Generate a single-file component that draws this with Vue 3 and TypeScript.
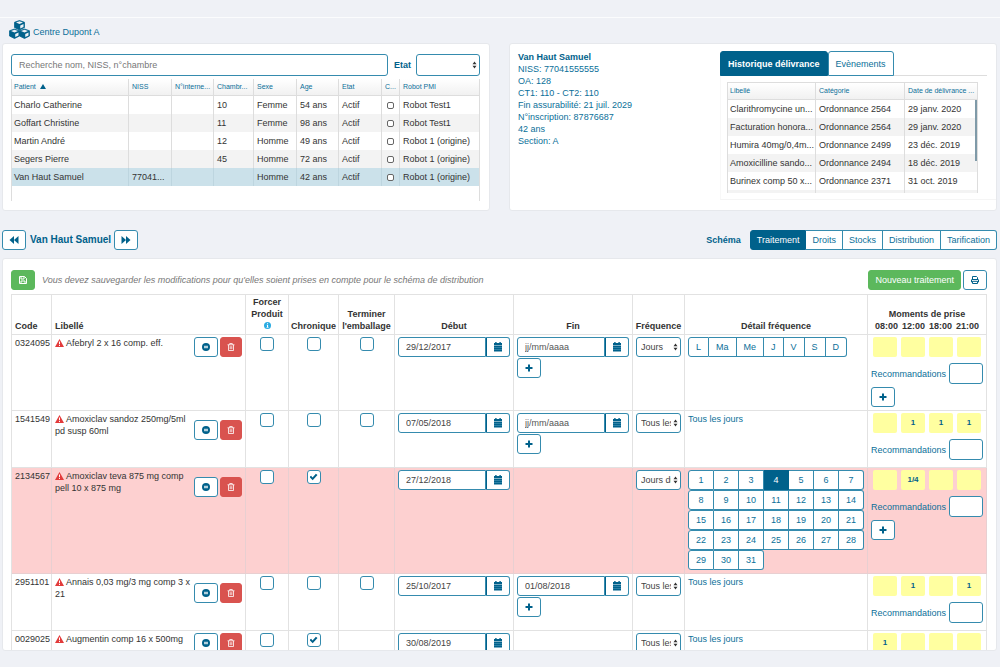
<script setup lang="ts">
import { ref } from 'vue'

interface Patient {
  name: string
  niss: string
  room: string
  sex: string
  age: string
  robot: string
}

interface Treatment {
  code: string
  label: string
  chronic: boolean
  canFinish: boolean
  start: string
  end: string | null
  frequency: string
  detail: 'week' | 'month' | 'daily'
  doses: string[]
  extraDose: boolean
  alert?: boolean
}

const patients: Patient[] = [
  { name: 'Charlo Catherine', niss: '', room: '10', sex: 'Femme', age: '54 ans', robot: 'Robot Test1' },
  { name: 'Goffart Christine', niss: '', room: '11', sex: 'Femme', age: '98 ans', robot: 'Robot Test1' },
  { name: 'Martin André', niss: '', room: '12', sex: 'Homme', age: '49 ans', robot: 'Robot 1 (origine)' },
  { name: 'Segers Pierre', niss: '', room: '45', sex: 'Homme', age: '72 ans', robot: 'Robot 1 (origine)' },
  { name: 'Van Haut Samuel', niss: '77041...', room: '', sex: 'Homme', age: '42 ans', robot: 'Robot 1 (origine)' },
]
const selected = ref('Van Haut Samuel')

const details: string[] = [
  'NISS: 77041555555',
  'OA: 128',
  'CT1: 110 - CT2: 110',
  'Fin assurabilité: 21 juil. 2029',
  'N°inscription: 87876687',
  '42 ans',
  'Section: A',
]

const history: string[][] = [
  ['Clarithromycine un...', 'Ordonnance 2564', '29 janv. 2020'],
  ['Facturation honora...', 'Ordonnance 2564', '29 janv. 2020'],
  ['Humira 40mg/0,4m...', 'Ordonnance 2499', '23 déc. 2019'],
  ['Amoxicilline sando...', 'Ordonnance 2494', '18 déc. 2019'],
  ['Burinex comp 50 x...', 'Ordonnance 2371', '31 oct. 2019'],
]

const sections = ['Traitement', 'Droits', 'Stocks', 'Distribution', 'Tarification']
const section = ref('Traitement')

const weekDays = ['L', 'Ma', 'Me', 'J', 'V', 'S', 'D']
const monthWeeks: number[][] = [0, 7, 14, 21, 28].map((first) =>
  Array.from({ length: Math.min(7, 31 - first) }, (_, i) => first + i + 1),
)
const monthDay = ref(4)
const hours = ['08:00', '12:00', '18:00', '21:00']

const treatments = ref<Treatment[]>([
  { code: '0324095', label: 'Afebryl 2 x 16 comp. eff.', chronic: false, canFinish: true, start: '29/12/2017', end: '', frequency: 'Jours', detail: 'week', doses: ['', '', '', ''], extraDose: true },
  { code: '1541549', label: 'Amoxiclav sandoz 250mg/5ml pd susp 60ml', chronic: false, canFinish: true, start: '07/05/2018', end: '', frequency: 'Tous les jours', detail: 'daily', doses: ['', '1', '1', '1'], extraDose: false },
  { code: '2134567', label: 'Amoxiclav teva 875 mg comp pell 10 x 875 mg', chronic: true, canFinish: false, start: '27/12/2018', end: null, frequency: 'Jours du mois', detail: 'month', doses: ['', '1/4', '', ''], extraDose: true, alert: true },
  { code: '2951101', label: 'Annais 0,03 mg/3 mg comp 3 x 21', chronic: false, canFinish: true, start: '25/10/2017', end: '01/08/2018', frequency: 'Tous les jours', detail: 'daily', doses: ['', '1', '', '1'], extraDose: false },
  { code: '0029025', label: 'Augmentin comp 16 x 500mg', chronic: true, canFinish: false, start: '30/08/2019', end: null, frequency: 'Tous les jours', detail: 'daily', doses: ['1', '', '', ''], extraDose: false },
])
</script>

<template>
  <div class="page">
    <header class="brand">
      <svg class="cubes" viewBox="0 0 42 38" aria-hidden="true">
        <g v-for="(c, i) in [[21, 10], [11, 27], [31, 27]]" :key="i" :transform="`translate(${c[0]} ${c[1]})`">
          <path d="M0-9 10-5.500V5L0 10-10 5V-5.500Z" fill="#00618b" stroke="#00618b" stroke-width="1.500" stroke-linejoin="round" />
          <path d="M0-7.500 7-4.800 0-2-7-4.800Z" fill="#eef1f6" />
          <path d="M1.500 .8 8-2V3.800L1.500 7Z" fill="#eef1f6" />
        </g>
      </svg>
      <span>Centre Dupont A</span>
    </header>

    <div class="top">
      <section class="card patients">
        <div class="search">
          <input type="text" class="field" aria-label="Recherche" placeholder="Recherche nom, NISS, n°chambre" />
          <label for="state">Etat</label>
          <span class="pick state">
            <select id="state" class="field"><option></option></select>
            <svg viewBox="0 0 6 10" aria-hidden="true"><path d="M3 .5 5.500 4H.5ZM3 9.500 5.500 6H.5Z" /></svg>
          </span>
        </div>
        <div class="frame grow">
          <table class="list">
            <colgroup><col /><col class="w43" /><col class="w42" /><col class="w40" /><col class="w43" /><col class="w42" /><col class="w43" /><col class="w18" /><col class="w80" /></colgroup>
            <thead>
              <tr>
                <th>Patient <svg class="sort" viewBox="0 0 6 5" aria-hidden="true"><path d="M3 0 6 5H0Z" /></svg></th>
                <th>NISS</th><th>N°interne...</th><th>Chambr...</th><th>Sexe</th><th>Age</th><th>Etat</th><th>C...</th><th>Robot PMI</th>
              </tr>
            </thead>
            <tbody>
              <tr v-for="p in patients" :key="p.name" :class="{ current: p.name === selected }" @click="selected = p.name">
                <td>{{ p.name }}</td><td>{{ p.niss }}</td><td></td><td>{{ p.room }}</td><td>{{ p.sex }}</td><td>{{ p.age }}</td><td>Actif</td>
                <td class="mini"><input type="checkbox" :aria-label="p.name" /></td>
                <td>{{ p.robot }}</td>
              </tr>
            </tbody>
          </table>
        </div>
      </section>

      <section class="card summary">
        <div class="identity">
          <strong>Van Haut Samuel</strong>
          <span v-for="d in details" :key="d">{{ d }}</span>
        </div>
        <div class="records">
          <div class="tabs">
            <button type="button" class="tab on">Historique délivrance</button>
            <button type="button" class="tab">Evènements</button>
          </div>
          <div class="tabpane">
            <div class="frame scroller">
              <table class="list">
                <colgroup><col /><col class="w89" /><col class="w73" /></colgroup>
                <thead><tr><th>Libellé</th><th>Catégorie</th><th>Date de délivrance ...</th></tr></thead>
                <tbody>
                  <tr v-for="h in history" :key="h[0]"><td v-for="c in h" :key="c">{{ c }}</td></tr>
                  <tr class="peek"><td></td><td></td><td></td></tr>
                </tbody>
              </table>
              <span class="thumb"></span>
            </div>
          </div>
        </div>
      </section>
    </div>

    <nav class="bar">
      <button type="button" class="btn icon" aria-label="Patient précédent"><svg class="i10" viewBox="0 0 10 10"><path d="M5 1V9L.5 5ZM9.500 1V9L5 5Z" /></svg></button>
      <strong class="who">Van Haut Samuel</strong>
      <button type="button" class="btn icon" aria-label="Patient suivant"><svg class="i10" viewBox="0 0 10 10"><path d="M5 1V9L9.500 5ZM.5 1V9L5 5Z" /></svg></button>
      <strong class="schema">Schéma</strong>
      <div class="group">
        <button v-for="s in sections" :key="s" type="button" class="btn tight" :class="{ on: s === section }" @click="section = s">{{ s }}</button>
      </div>
    </nav>

    <main class="card work">
      <div class="tools">
        <button type="button" class="btn green icon" aria-label="Sauvegarder">
          <svg class="i8" viewBox="0 0 8 8"><path d="M.5.500H5.500L7.500 2.500V7.500H.5ZM2 .5V3H5V.500M2 7.500V5H6V7.500" fill="none" stroke="#fff" stroke-width="1" /></svg>
        </button>
        <em>Vous devez sauvegarder les modifications pour qu'elles soient prises en compte pour le schéma de distribution</em>
        <button type="button" class="btn green tight">Nouveau traitement</button>
        <button type="button" class="btn icon" aria-label="Imprimer">
          <svg class="i8" viewBox="0 0 8 8"><path d="M1.500 3.500V.500H5.500L6.500 1.500V3.500M1.500 6H.5V4Q.5 3.500 1 3.500H7Q7.500 3.500 7.500 4V6H6.500M1.500 5.300H6.500V7.500H1.500Z" fill="none" stroke="#00618b" stroke-width="1" /></svg>
        </button>
      </div>

      <table class="plan">
        <colgroup><col class="w40" /><col class="w194" /><col class="w43" /><col class="w50" /><col class="w56" /><col class="w119" /><col class="w119" /><col class="w52" /><col /><col class="w119" /></colgroup>
        <thead>
          <tr>
            <th class="left">Code</th>
            <th class="left">Libellé</th>
            <th>Forcer<br />Produit<br /><svg class="info" viewBox="0 0 8 8" aria-hidden="true"><circle cx="4" cy="4" r="4" fill="#29abe2" /><path d="M3.400 1.300H4.700V2.300H3.400ZM3 3H4.700V5.800H5.200V6.600H2.900V5.800H3.400V3.800H3Z" fill="#fff" /></svg></th>
            <th>Chronique</th>
            <th>Terminer<br />l'emballage</th>
            <th>Début</th>
            <th>Fin</th>
            <th>Fréquence</th>
            <th>Détail fréquence</th>
            <th>Moments de prise<div class="hours"><span v-for="h in hours" :key="h">{{ h }}</span></div></th>
          </tr>
        </thead>
        <tbody>
          <tr v-for="t in treatments" :key="t.code" :class="{ alert: t.alert }">
            <td class="code">{{ t.code }}</td>
            <td>
              <div class="drug">
                <span class="name"><svg class="warn" viewBox="0 0 9 8" aria-hidden="true"><path d="M4.500 0 9 8H0Z" fill="#e23b3b" /><path d="M4 2.500H5V5.200H4ZM4 5.900H5V6.900H4Z" fill="#fff" /></svg> {{ t.label }}</span>
                <button type="button" class="btn icon" aria-label="Suspendre"><svg class="i8" viewBox="0 0 8 8"><circle cx="4" cy="4" r="4" /><path d="M2.300 2.700H3.700V5.300H2.300ZM4.300 2.700H5.700V5.300H4.300Z" fill="#fff" /></svg></button>
                <button type="button" class="btn red" aria-label="Supprimer"><svg class="i8" viewBox="0 0 8 8"><path d="M.5 1.800H7.500M2.700 1.800V.500H5.300V1.800M1.500 1.800V7.500H6.500V1.800M3.200 3.200V6.200M4.800 3.200V6.200" fill="none" stroke="#fff" stroke-width=".8" /></svg></button>
              </div>
            </td>
            <td class="tick"><input type="checkbox" aria-label="Forcer produit" /></td>
            <td class="tick"><input v-model="t.chronic" type="checkbox" aria-label="Chronique" /></td>
            <td class="tick"><input v-if="t.canFinish" type="checkbox" aria-label="Terminer l'emballage" /></td>
            <td>
              <div class="date">
                <input v-model="t.start" type="text" class="field" aria-label="Début" />
                <button type="button" class="btn icon" aria-label="Calendrier"><svg class="i10" viewBox="0 0 10 10"><path d="M1 1H2.200V0H3.600V1H6.400V0H7.800V1H9V3H1ZM1 3.500H9V9.500H1Z" /><path d="M1 5.500H9M1 7.500H9" stroke="#5ba3c0" stroke-width=".5" /></svg></button>
              </div>
            </td>
            <td>
              <template v-if="t.end !== null">
                <div class="date">
                  <input v-model="t.end" type="text" class="field" aria-label="Fin" placeholder="jj/mm/aaaa" />
                  <button type="button" class="btn icon" aria-label="Calendrier"><svg class="i10" viewBox="0 0 10 10"><path d="M1 1H2.200V0H3.600V1H6.400V0H7.800V1H9V3H1ZM1 3.500H9V9.500H1Z" /><path d="M1 5.500H9M1 7.500H9" stroke="#5ba3c0" stroke-width=".5" /></svg></button>
                </div>
                <button type="button" class="btn icon below" aria-label="Ajouter"><svg class="i8" viewBox="0 0 8 8"><path d="M3 .5H5V3H7.500V5H5V7.500H3V5H.5V3H3Z" /></svg></button>
              </template>
            </td>
            <td>
              <span class="pick freq">
                <select class="field" aria-label="Fréquence"><option>{{ t.frequency }}</option></select>
                <svg viewBox="0 0 6 10" aria-hidden="true"><path d="M3 .5 5.500 4H.5ZM3 9.500 5.500 6H.5Z" /></svg>
              </span>
            </td>
            <td>
              <div v-if="t.detail === 'week'" class="group">
                <button v-for="d in weekDays" :key="d" type="button" class="btn">{{ d }}</button>
              </div>
              <template v-else-if="t.detail === 'month'">
                <div v-for="w in monthWeeks" :key="w[0]" class="group month">
                  <button v-for="d in w" :key="d" type="button" class="btn" :class="{ on: d === monthDay }" @click="monthDay = d">{{ d }}</button>
                </div>
              </template>
              <span v-else class="daily">Tous les jours</span>
            </td>
            <td>
              <div class="doses"><button v-for="(d, i) in t.doses" :key="i" type="button" :aria-label="hours[i]">{{ d }}</button></div>
              <div class="advice"><label :for="'r' + t.code">Recommandations</label><input :id="'r' + t.code" type="text" class="field" /></div>
              <button v-if="t.extraDose" type="button" class="btn icon more" aria-label="Ajouter un moment"><svg class="i8" viewBox="0 0 8 8"><path d="M3 .5H5V3H7.500V5H5V7.500H3V5H.5V3H3Z" /></svg></button>
            </td>
          </tr>
        </tbody>
      </table>
    </main>
  </div>
</template>

<style>
body {
  background: #eff1f6;
}
</style>

<style scoped>
* {
  box-sizing: border-box;
}
.page {
  display: flex;
  flex-direction: column;
  height: 100vh;
  padding: 17px 3px 16px 2px;
  overflow: hidden;
  font: 9px/12px "Liberation Sans", Arial, sans-serif;
  color: #333;
}
.brand {
  display: flex;
  gap: 3px;
  height: 26px;
  padding: 2px 9px 0;
  margin: 0 -3px 0 -2px;
  border-top: 1px solid #fbfcfd;
  color: #0b6f99;
}
.brand span {
  padding-top: 6px;
}
.cubes {
  width: 21px;
  height: 19px;
}
.card {
  background: #fff;
  border: 1px solid #e6e8ec;
  border-radius: 3px;
}
.top {
  display: grid;
  grid-template-columns: 1fr 1fr;
  gap: 19px;
  height: 168px;
}
.patients {
  display: flex;
  flex-direction: column;
  gap: 3px;
  padding: 10px 9px 9px 8px;
}
.search {
  display: flex;
  align-items: center;
}
.search > .field {
  flex: 1;
  min-width: 0;
  padding: 0 7px;
}
.search label {
  margin: 0 5px 0 6px;
  font-weight: bold;
  color: #00618b;
}
.field {
  height: 22px;
  margin: 0;
  border: 1px solid #358bae;
  border-radius: 3px;
  background: #fff;
  color: #444;
  font: inherit;
  outline: 0;
}
.field::placeholder {
  color: #777;
}
.pick {
  position: relative;
  display: block;
}
.pick select {
  display: block;
  width: 100%;
  appearance: none;
}
.pick svg {
  position: absolute;
  right: 3px;
  top: 50%;
  width: 5px;
  height: 8px;
  margin-top: -4px;
  fill: #333;
  pointer-events: none;
}
.state {
  width: 64px;
}
.frame {
  border-left: 1px solid #ddd;
  border-right: 1px solid #ddd;
}
.grow {
  flex: 1;
}
.list {
  width: 100%;
  table-layout: fixed;
  border-spacing: 0;
}
.w18 {
  width: 18px;
}
.w40 {
  width: 40px;
}
.w42 {
  width: 42px;
}
.w43 {
  width: 43px;
}
.w50 {
  width: 50px;
}
.w52 {
  width: 52px;
}
.w56 {
  width: 56px;
}
.w73 {
  width: 73px;
}
.w80 {
  width: 80px;
}
.w89 {
  width: 89px;
}
.w119 {
  width: 119px;
}
.w194 {
  width: 194px;
}
.list th,
.list td {
  height: 18px;
  padding: 0 0 0 3px;
  border-left: 1px solid #ddd;
  overflow: hidden;
  text-align: left;
  white-space: nowrap;
}
.list th:first-child,
.list td:first-child {
  padding-left: 2px;
  border-left: 0;
}
.list th {
  height: 17px;
  border-bottom: 1px solid #ddd;
  background: linear-gradient(#fff, #f1f1f1);
  font-size: 7px;
  line-height: 8px;
  font-weight: normal;
  color: #0b6f99;
}
.list tr:nth-child(even) td {
  background: #f3f3f3;
}
.list tr.current td {
  background: #cbe1ea;
  border-color: #bdd5df;
}
.list .mini {
  padding: 0;
  text-align: center;
}
.mini input {
  display: block;
  width: 7px;
  height: 7px;
  margin: 0 auto;
  appearance: none;
  border: 1px solid #666;
  border-radius: 2px;
  background: #fff;
}
.sort {
  width: 6px;
  height: 5px;
  margin-left: 2px;
  fill: #00618b;
}
.summary {
  display: flex;
  justify-content: space-between;
}
.identity {
  display: flex;
  flex-direction: column;
  padding: 7px 8px;
  color: #0b6f99;
}
.identity strong {
  color: #00618b;
}
.records {
  width: 276px;
  padding: 7px 0 9px;
}
.tabs {
  display: flex;
  margin-right: 9px;
  border-bottom: 1px solid #ddd;
}
.tab {
  height: 25px;
  margin-bottom: -1px;
  padding: 0 7px;
  border: 1px solid #358bae;
  border-radius: 3px 3px 0 0;
  background: #fff;
  color: #0b6f99;
  font: inherit;
}
.tab.on {
  border-color: #00618b;
  background: #00618b;
  color: #fff;
  font-weight: bold;
}
.tabpane {
  padding: 6px 18px 6px 6px;
  border-bottom: 1px solid #f5f5f5;
  border-left: 1px solid #f8f8f8;
}
.scroller {
  position: relative;
  height: 111px;
  border-top: 1px solid #ddd;
  overflow: hidden;
}
.peek td {
  height: 6px;
}
.thumb {
  position: absolute;
  top: 17px;
  right: 0;
  width: 2px;
  height: 61px;
  background: #7f9aa8;
}
.bar {
  display: flex;
  align-items: center;
  margin: 19px 0 8px;
  color: #00618b;
}
.who {
  margin: 0 3px 0 4px;
  font-size: 10px;
}
.schema {
  margin: 0 9px 0 auto;
}
.btn {
  height: 20px;
  padding: 0 7px;
  border: 1px solid #358bae;
  border-radius: 3px;
  background: #fff;
  color: #0b6f99;
  font: inherit;
  white-space: nowrap;
}
.btn svg {
  display: block;
  margin: 0 auto;
  fill: #00618b;
}
.tight {
  padding: 0 6px;
}
.icon {
  flex: none;
  width: 24px;
  padding: 0;
}
.i8 {
  width: 8px;
  height: 8px;
}
.i10 {
  width: 10px;
  height: 10px;
}
.green {
  border-color: #5cb85c;
  background: #5cb85c;
  color: #fff;
}
.red {
  flex: none;
  width: 22px;
  padding: 0;
  border-color: #d9534f;
  background: #d9534f;
}
.btn.on {
  border-color: #00618b;
  background: #00618b;
  color: #fff;
}
.group {
  display: flex;
}
.group .btn {
  border-radius: 0;
}
.group .btn + .btn {
  border-left: 0;
}
.group .btn:first-child {
  border-radius: 3px 0 0 3px;
}
.group .btn:last-child {
  border-radius: 0 3px 3px 0;
}
.month .btn {
  width: 25px;
  padding: 0;
}
.month .btn:first-child {
  width: 26px;
}
.work {
  flex: 1;
  min-height: 0;
  padding: 11px 9px 0 8px;
  overflow: hidden;
}
.tools {
  display: flex;
  align-items: center;
  gap: 2px;
  margin-bottom: 4px;
}
.tools em {
  flex: 1;
  padding-left: 5px;
  color: #777;
}
.plan {
  width: 100%;
  table-layout: fixed;
  border-spacing: 0;
  border-top: 1px solid #e2e2e2;
  border-left: 1px solid #e2e2e2;
}
.plan th,
.plan td {
  padding: 2px 3px 3px;
  border-right: 1px solid #e2e2e2;
  border-bottom: 1px solid #e2e2e2;
  vertical-align: top;
}
.plan th {
  height: 40px;
  padding: 0 0 2px;
  vertical-align: bottom;
  white-space: nowrap;
}
.plan th.left {
  padding-left: 3px;
  text-align: left;
}
.plan tbody tr {
  height: 57px;
}
.plan tr.alert td {
  background: #fdd0d0;
  border-color: #e8cfd1;
}
.info {
  width: 7px;
  height: 7px;
}
.hours {
  display: flex;
  justify-content: center;
  gap: 4px;
}
.plan .code {
  padding-right: 0;
}
.drug {
  display: flex;
  align-items: flex-end;
  gap: 2px;
}
.name {
  flex: 1;
  align-self: flex-start;
  padding-bottom: 3px;
}
.warn {
  width: 9px;
  height: 8px;
  vertical-align: -1px;
}
.tick input {
  display: block;
  position: relative;
  width: 14px;
  height: 14px;
  margin: 0 auto;
  appearance: none;
  border: 1px solid #358bae;
  border-radius: 3px;
  background: #fff;
}
.tick input:checked::before {
  content: "";
  position: absolute;
  inset: 2px;
  background: #00618b;
  clip-path: polygon(0 50%, 20% 35%, 38% 55%, 80% 8%, 100% 25%, 40% 92%);
}
.date {
  display: flex;
}
.date .field {
  flex: 1;
  min-width: 0;
  height: 20px;
  padding: 0 7px;
  border-radius: 3px 0 0 3px;
}
.date .field::placeholder {
  color: #555;
}
.date .btn {
  border-left-color: #00618b;
  border-radius: 0 3px 3px 0;
}
.below {
  display: block;
  margin-top: 1px;
}
.freq select {
  height: 20px;
  padding: 0 9px 0 4px;
}
.daily {
  color: #0b6f99;
}
.doses {
  display: flex;
  gap: 4px;
  padding-left: 2px;
}
.doses button {
  width: 24px;
  height: 20px;
  padding: 0;
  border: 0;
  border-radius: 2px;
  background: #ffffa0;
  color: #00618b;
  font: bold 8px/12px "Liberation Sans", Arial, sans-serif;
}
.advice {
  display: flex;
  align-items: center;
  justify-content: space-between;
  margin-top: 6px;
  color: #0b6f99;
}
.advice .field {
  width: 34px;
  height: 21px;
}
.more {
  display: block;
  margin-top: 3px;
}
</style>
